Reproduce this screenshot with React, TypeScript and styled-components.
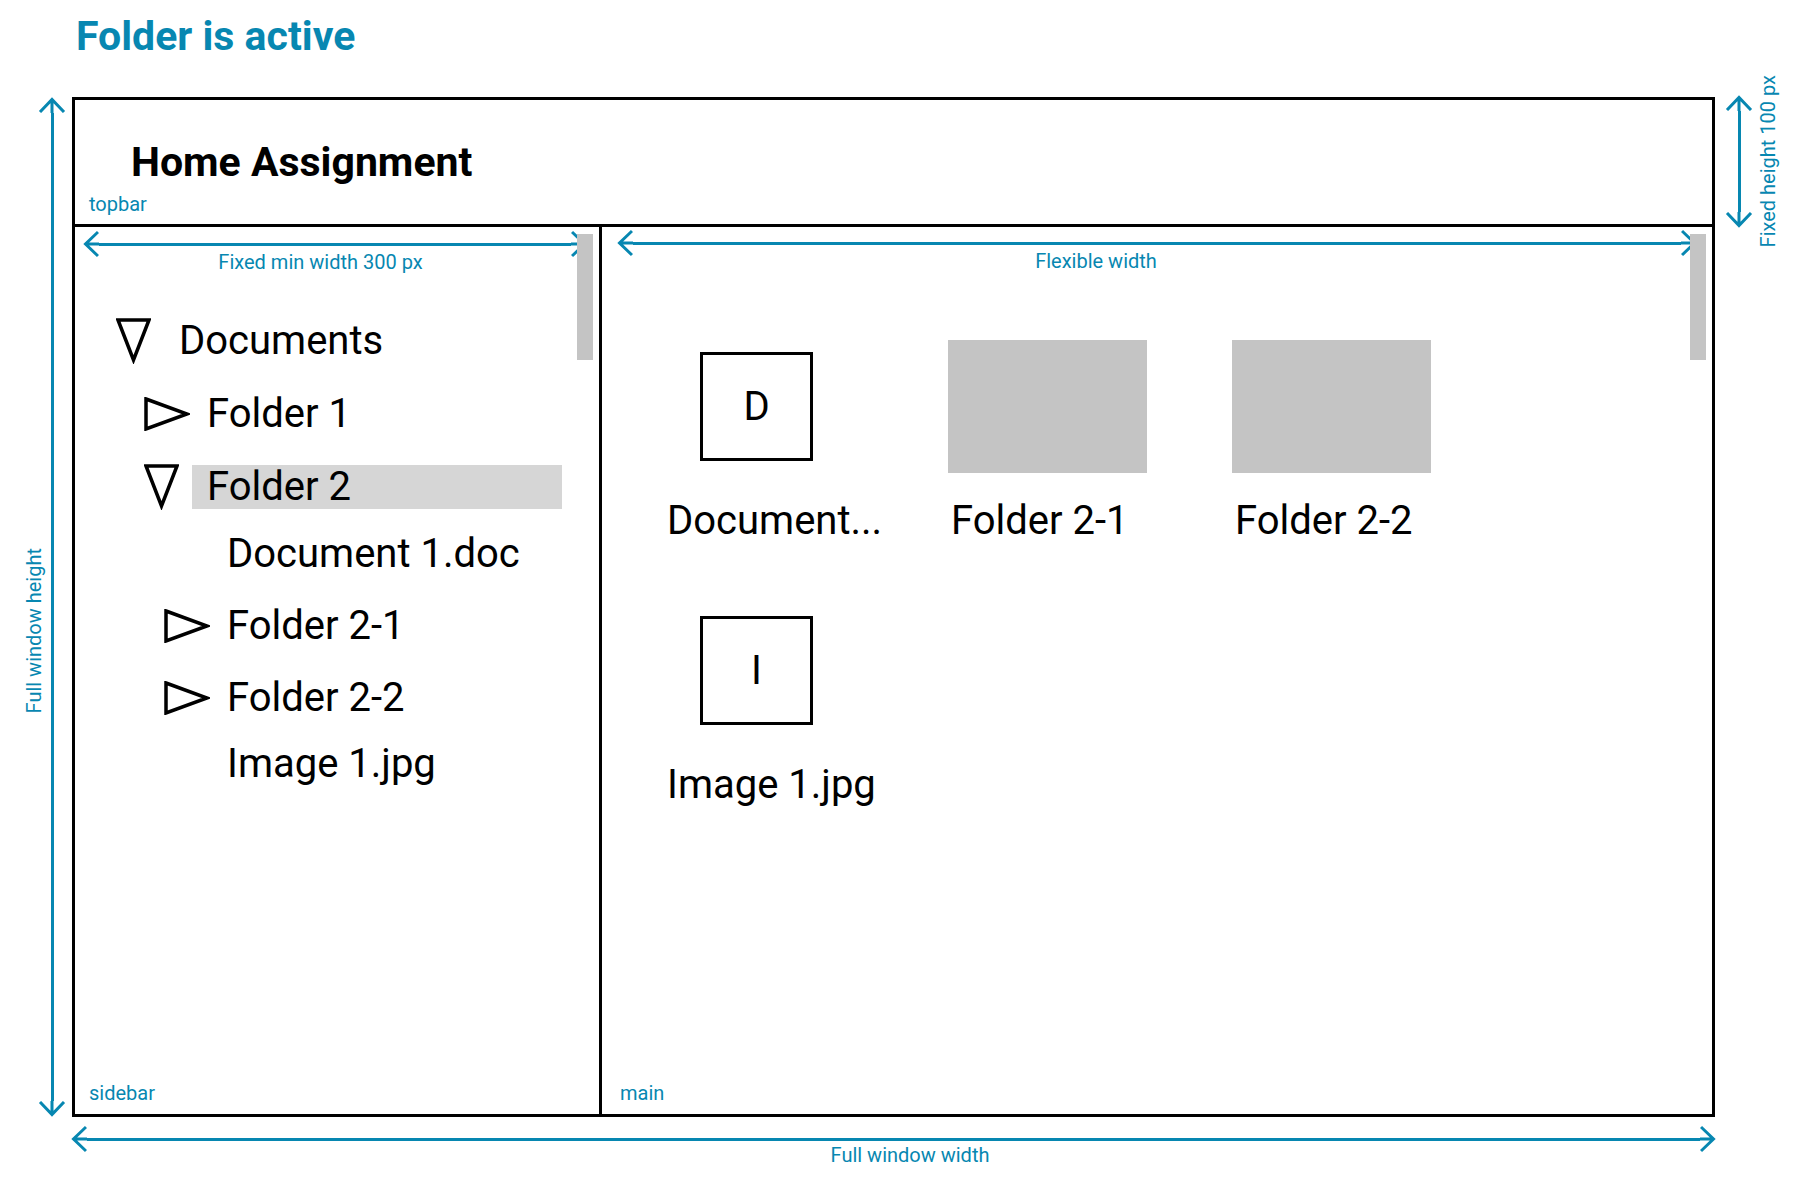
import styled, { createGlobalStyle } from 'styled-components';

const BLUE = '#0787b1';
const FONT = `Roboto, "Liberation Sans", Arial, sans-serif`;

const GlobalStyle = createGlobalStyle`
  html, body {
    margin: 0;
    padding: 0;
    background: #ffffff;
    overflow: hidden;
  }
  body {
    font-family: ${FONT};
    color: #000000;
  }
`;

type Dir = 'h' | 'v';

const Page = styled.div`
  width: 1806px;
  height: 1184px;
  padding-top: 12px;
  box-sizing: border-box;
`;

const Title = styled.h1`
  margin: 0 0 0 76px;
  font-size: 41px;
  line-height: 48px;
  font-weight: 700;
  color: ${BLUE};
`;

const Diagram = styled.div`
  margin-top: 37px;
  display: grid;
  grid-template-columns: 72px 1643px 1fr;
  grid-template-rows: 1020px auto;
`;

/* dimension arrows */
const Track = styled.div<{ $dir: Dir }>`
  display: flex;
  flex-direction: ${({ $dir }) => ($dir === 'h' ? 'row' : 'column')};
  align-items: center;
  flex-shrink: 0;
  color: ${BLUE};
  ${({ $dir }) => ($dir === 'h' ? 'height: 28px;' : 'width: 28px; align-self: stretch;')}
`;

const Shaft = styled.div<{ $dir: Dir }>`
  flex: 1;
  background: currentColor;
  ${({ $dir }) => ($dir === 'h' ? 'height: 3px;' : 'width: 3px;')}
`;

const heads = {
  left: { w: 16, h: 28, d: 'M15 2 L2.5 14 L15 26 M2 14 H16' },
  right: { w: 16, h: 28, d: 'M1 2 L13.5 14 L1 26 M0 14 H14' },
  up: { w: 28, h: 16, d: 'M2 15 L14 2.5 L26 15 M14 2 V16' },
  down: { w: 28, h: 16, d: 'M2 1 L14 13.5 L26 1 M14 0 V14' },
};

function Head({ side }: { side: keyof typeof heads }) {
  const h = heads[side];
  return (
    <svg width={h.w} height={h.h} viewBox={`0 0 ${h.w} ${h.h}`} style={{ display: 'block', flexShrink: 0 }}>
      <path d={h.d} fill="none" stroke="currentColor" strokeWidth={3} />
    </svg>
  );
}

function Arrow({ dir, className }: { dir: Dir; className?: string }) {
  return (
    <Track $dir={dir} className={className}>
      <Head side={dir === 'h' ? 'left' : 'up'} />
      <Shaft $dir={dir} />
      <Head side={dir === 'h' ? 'right' : 'down'} />
    </Track>
  );
}

const Note = styled.div`
  font-size: 20px;
  line-height: 24px;
  color: ${BLUE};
  white-space: nowrap;
`;

const VerticalNote = styled(Note)`
  writing-mode: vertical-rl;
  transform: rotate(180deg);
`;

const LeftDim = styled.div`
  display: flex;
  justify-content: flex-end;
  padding-right: 6px;
  ${VerticalNote} {
    align-self: center;
    margin-top: 48px;
    margin-right: -8px;
  }
`;

const RightDim = styled.div`
  align-self: start;
  height: 133px;
  margin-top: -2px;
  padding-left: 10px;
  display: flex;
  align-items: center;
  ${VerticalNote} {
    margin-left: 3px;
  }
`;

const BottomDim = styled.div`
  grid-column: 2;
  display: flex;
  flex-direction: column;
  margin: 8px -1px 0 -1px;
  ${Note} {
    margin-top: -10px;
    padding-left: 33px;
    text-align: center;
  }
`;

/* wireframe */
const Frame = styled.div`
  box-sizing: border-box;
  border: 3px solid #000;
  display: flex;
  flex-direction: column;
  min-height: 0;
`;

const Topbar = styled.header`
  box-sizing: border-box;
  height: 127px;
  flex-shrink: 0;
  border-bottom: 3px solid #000;
  padding: 38px 0 0 14px;
`;

const AppName = styled.h2`
  margin: 0 0 6px 42px;
  font-size: 41px;
  line-height: 48px;
  font-weight: 700;
`;

const Body = styled.div`
  flex: 1;
  display: flex;
  min-height: 0;
`;

const Pane = styled.section<{ $side?: boolean }>`
  position: relative;
  display: flex;
  flex-direction: column;
  box-sizing: border-box;
  min-height: 0;
  ${({ $side }) => ($side ? 'width: 527px; border-right: 3px solid #000; flex-shrink: 0;' : 'flex: 1;')}
`;

const PaneArrow = styled(Arrow)<{ $side?: boolean }>`
  margin: ${({ $side }) => ($side ? '3px 12px 0 8px' : '2px 15px 0 15px')};
`;

const Caption = styled(Note)<{ $shift: number }>`
  margin-top: -8px;
  text-align: center;
  padding-right: ${({ $shift }) => $shift}px;
`;

const PaneLabel = styled(Note)<{ $inset: number }>`
  margin-top: auto;
  padding: 0 0 9px ${({ $inset }) => $inset}px;
`;

const Scrollbar = styled.div`
  position: absolute;
  top: 7px;
  right: 6px;
  width: 16px;
  height: 126px;
  background: #c4c4c4;
`;

/* tree */
const Tree = styled.ul`
  list-style: none;
  margin: 44px 0 0 0;
  padding: 0;
  display: flex;
  flex-direction: column;
  gap: 28px;
`;

const indents = [41, 69, 89];

const TreeRow = styled.li<{ $level: number; $file?: boolean }>`
  display: flex;
  align-items: center;
  padding-left: ${({ $level }) => indents[$level]}px;
  margin-right: 37px;
  margin-top: ${({ $file }) => ($file ? '-6px' : '0')};
`;

const Toggle = styled.span`
  width: 48px;
  flex-shrink: 0;
  display: flex;
  align-items: center;
`;

const TreeLabel = styled.span<{ $active?: boolean }>`
  flex: 1;
  height: 44px;
  line-height: 44px;
  padding: 0 15px;
  font-size: 40px;
  white-space: nowrap;
  background: ${({ $active }) => ($active ? '#d6d6d6' : 'transparent')};
`;

function Triangle({ open }: { open: boolean }) {
  if (open) {
    return (
      <svg width={35} height={46} viewBox="0 0 35 46" style={{ display: 'block' }}>
        <polygon points="2,2 33,2 17.5,42" fill="none" stroke="#000" strokeWidth={3.5} />
      </svg>
    );
  }
  return (
    <svg width={46} height={34} viewBox="0 0 46 34" style={{ display: 'block' }}>
      <polygon points="2,2 43,17 2,32" fill="none" stroke="#000" strokeWidth={3.5} />
    </svg>
  );
}

/* content grid */
const Grid = styled.div`
  margin-top: 67px;
  padding-left: 62px;
  display: grid;
  grid-template-columns: repeat(3, 199px);
  column-gap: 85px;
  row-gap: 59px;
`;

const Tile = styled.div`
  display: flex;
  flex-direction: column;
  align-items: flex-start;
`;

const Thumb = styled.div`
  width: 199px;
  height: 133px;
  display: flex;
  align-items: center;
  justify-content: center;
`;

const FolderThumb = styled.div`
  width: 199px;
  height: 133px;
  background: #c4c4c4;
`;

const FileThumb = styled.div`
  box-sizing: border-box;
  width: 113px;
  height: 109px;
  margin-left: -14px;
  border: 3px solid #000;
  display: flex;
  align-items: center;
  justify-content: center;
  font-size: 40px;
`;

const TileName = styled.div`
  margin-top: 24px;
  padding-left: 3px;
  font-size: 40px;
  line-height: 48px;
  white-space: nowrap;
`;

const shorten = (name: string, max = 12) => (name.length > max ? name.slice(0, 8) + '...' : name);

const tree = [
  { name: 'Documents', level: 0, kind: 'open' },
  { name: 'Folder 1', level: 1, kind: 'closed' },
  { name: 'Folder 2', level: 1, kind: 'open', active: true },
  { name: 'Document 1.doc', level: 2, kind: 'file' },
  { name: 'Folder 2-1', level: 2, kind: 'closed' },
  { name: 'Folder 2-2', level: 2, kind: 'closed' },
  { name: 'Image 1.jpg', level: 2, kind: 'file' },
];

const items = [
  { name: 'Document 1.doc', folder: false },
  { name: 'Folder 2-1', folder: true },
  { name: 'Folder 2-2', folder: true },
  { name: 'Image 1.jpg', folder: false },
];

export default function App() {
  return (
    <>
      <GlobalStyle />
      <Page>
        <Title>Folder is active</Title>
        <Diagram>
          <LeftDim>
            <VerticalNote>Full window height</VerticalNote>
            <Arrow dir="v" />
          </LeftDim>

          <Frame>
            <Topbar>
              <AppName>Home Assignment</AppName>
              <Note>topbar</Note>
            </Topbar>
            <Body>
              <Pane $side>
                <Scrollbar />
                <PaneArrow dir="h" $side />
                <Caption $shift={33}>Fixed min width 300 px</Caption>
                <Tree>
                  {tree.map((t) => (
                    <TreeRow key={t.name} $level={t.level} $file={t.kind === 'file'}>
                      <Toggle>{t.kind !== 'file' && <Triangle open={t.kind === 'open'} />}</Toggle>
                      <TreeLabel $active={t.active}>{t.name}</TreeLabel>
                    </TreeRow>
                  ))}
                </Tree>
                <PaneLabel $inset={14}>sidebar</PaneLabel>
              </Pane>
              <Pane>
                <Scrollbar />
                <PaneArrow dir="h" />
                <Caption $shift={122}>Flexible width</Caption>
                <Grid>
                  {items.map((it) => (
                    <Tile key={it.name}>
                      <Thumb>
                        {it.folder ? <FolderThumb /> : <FileThumb>{it.name.charAt(0)}</FileThumb>}
                      </Thumb>
                      <TileName>{shorten(it.name)}</TileName>
                    </Tile>
                  ))}
                </Grid>
                <PaneLabel $inset={18}>main</PaneLabel>
              </Pane>
            </Body>
          </Frame>

          <RightDim>
            <Arrow dir="v" />
            <VerticalNote>Fixed height 100 px</VerticalNote>
          </RightDim>

          <BottomDim>
            <Arrow dir="h" />
            <Note>Full window width</Note>
          </BottomDim>
        </Diagram>
      </Page>
    </>
  );
}
